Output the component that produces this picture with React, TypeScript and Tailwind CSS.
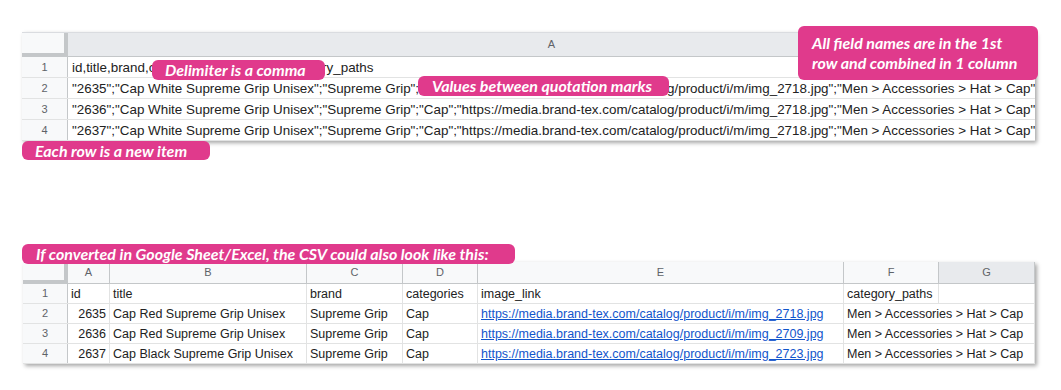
import React from 'react';

const ROWS_RAW = [
  'id,title,brand,categories,image_link,category_paths',
  '"2635";"Cap White Supreme Grip Unisex";"Supreme Grip";"Cap";"https://media.brand-tex.com/catalog/product/i/m/img_2718.jpg";"Men > Accessories > Hat > Cap"',
  '"2636";"Cap White Supreme Grip Unisex";"Supreme Grip";"Cap";"https://media.brand-tex.com/catalog/product/i/m/img_2718.jpg";"Men > Accessories > Hat > Cap"',
  '"2637";"Cap White Supreme Grip Unisex";"Supreme Grip";"Cap";"https://media.brand-tex.com/catalog/product/i/m/img_2718.jpg";"Men > Accessories > Hat > Cap"',
];

const COLS = [
  { key: 'A', w: 'w-[42px]' },
  { key: 'B', w: 'w-[197px]' },
  { key: 'C', w: 'w-[96px]' },
  { key: 'D', w: 'w-[75px]' },
  { key: 'E', w: 'w-[366px]' },
  { key: 'F', w: 'w-[95px]' },
  { key: 'G', w: 'w-[96px]' },
];

const TABLE = [
  ['id', 'title', 'brand', 'categories', 'image_link', 'category_paths', ''],
  ['2635', 'Cap Red Supreme Grip Unisex', 'Supreme Grip', 'Cap', 'https://media.brand-tex.com/catalog/product/i/m/img_2718.jpg', 'Men > Accessories > Hat > Cap', ''],
  ['2636', 'Cap Red Supreme Grip Unisex', 'Supreme Grip', 'Cap', 'https://media.brand-tex.com/catalog/product/i/m/img_2709.jpg', 'Men > Accessories > Hat > Cap', ''],
  ['2637', 'Cap Black Supreme Grip Unisex', 'Supreme Grip', 'Cap', 'https://media.brand-tex.com/catalog/product/i/m/img_2723.jpg', 'Men > Accessories > Hat > Cap', ''],
];

const sheetFont = "font-['Liberation_Sans',Arial,sans-serif]";
const labelCls =
  "absolute rounded-md bg-[#e03a8c] text-white font-['Lato',sans-serif] font-bold italic text-[16px] leading-[20px] whitespace-nowrap";

function CsvSheet() {
  return (
    <div
      className={`ml-[22px] w-[1013px] overflow-hidden border-t border-[#dadce0] bg-white shadow-[2px_2px_4px_rgba(0,0,0,0.35)] ${sheetFont}`}
    >
      <div className="flex h-[24px]">
        <div className="h-full w-[46px] shrink-0 border-r-[4px] border-b-[4px] border-[#c4c7c9] bg-[#f8f9fa]" />
        <div className="flex flex-1 items-center justify-center border-b border-[#c4c7c9] bg-[#e8eaed] text-[11px] text-[#5f6368]">
          A
        </div>
      </div>
      {ROWS_RAW.map((r, i) => (
        <div key={i} className="flex h-[21px] border-b border-[#e2e3e3]">
          <div className="flex w-[46px] shrink-0 items-center justify-center border-r border-[#c4c7c9] bg-[#f8f9fa] text-[11px] text-[#5f6368]">
            {i + 1}
          </div>
          <div className="flex-1 overflow-hidden whitespace-nowrap pl-[4px] pt-[1px] text-[13.4px] leading-[20px] text-[#222]">
            {r}
          </div>
        </div>
      ))}
    </div>
  );
}

function TableSheet() {
  return (
    <div
      className={`ml-[23px] w-[1012px] overflow-hidden bg-white shadow-[2px_2px_4px_rgba(0,0,0,0.35)] ${sheetFont}`}
    >
      <div className="flex h-[22px]">
        <div className="h-full w-[45px] shrink-0 border-r-[4px] border-b-[4px] border-[#c4c7c9] bg-[#f8f9fa]" />
        {COLS.map((c) => (
          <div
            key={c.key}
            className={`${c.w} flex shrink-0 items-center justify-center border-r border-b border-[#c4c7c9] text-[11px] text-[#5f6368] ${
              c.key === 'G' ? 'bg-[#e8eaed]' : 'bg-[#f8f9fa]'
            }`}
          >
            {c.key}
          </div>
        ))}
      </div>
      {TABLE.map((row, i) => {
        // long text in F spills over the empty G cell, like Sheets does
        const spill = i > 0;
        const cells = spill ? row.slice(0, 6) : row;
        return (
          <div key={i} className="flex h-[20px] border-b border-[#e2e3e3]">
            <div className="flex w-[45px] shrink-0 items-center justify-center border-r border-[#c4c7c9] bg-[#f8f9fa] text-[11px] text-[#5f6368]">
              {i + 1}
            </div>
            {cells.map((cell, j) => {
              const isNum = i > 0 && j === 0;
              const isLink = i > 0 && j === 4;
              const w = spill && j === 5 ? 'w-[191px]' : COLS[j].w;
              return (
                <div
                  key={j}
                  className={`${w} shrink-0 overflow-hidden whitespace-nowrap border-r border-[#e2e3e3] px-[3px] pt-[1px] text-[12.5px] leading-[18px] ${
                    isNum ? 'text-right' : ''
                  } ${isLink ? 'text-[#1155cc] underline' : 'text-[#222]'}`}
                >
                  {cell}
                </div>
              );
            })}
          </div>
        );
      })}
    </div>
  );
}

export default function App() {
  return (
    <div className="relative h-[390px] w-[1061px] overflow-hidden bg-white">
      <div className="pt-[32px]">
        <CsvSheet />
      </div>
      <div className="pt-[121px]">
        <TableSheet />
      </div>

      {/* callouts */}
      <div className={`${labelCls} left-[152px] top-[60px] h-[20px] w-[173px] pl-[13px]`}>
        Delimiter is a comma
      </div>
      <div className={`${labelCls} left-[418px] top-[76px] h-[20px] w-[251px] pl-[14px]`}>
        Values between quotation marks
      </div>
      <div className={`${labelCls} left-[798px] top-[26px] h-[54px] w-[240px] rounded-lg pl-[14px] pt-[7px]`}>
        All field names are in the 1st
        <br />
        row and combined in 1 column
      </div>
      <div className={`${labelCls} left-[22px] top-[141px] h-[19px] w-[188px] pl-[13px] leading-[19px]`}>
        Each row is a new item
      </div>
      <div className={`${labelCls} left-[22px] top-[244px] h-[20px] w-[493px] pl-[14px]`}>
        If converted in Google Sheet/Excel, the CSV could also look like this:
      </div>
    </div>
  );
}
